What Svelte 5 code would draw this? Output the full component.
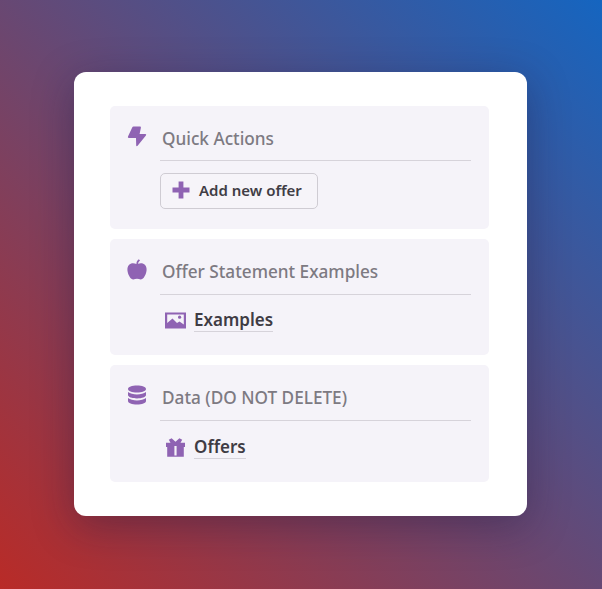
<script>
  const sections = [
    { title: "Quick Actions", icon: "bolt", button: "Add new offer" },
    { title: "Offer Statement Examples", icon: "apple", link: "Examples", linkIcon: "image" },
    { title: "Data (DO NOT DELETE)", icon: "database", link: "Offers", linkIcon: "gift" }
  ];

  const icons = {
    bolt: "M6.5 0.5 H13 Q14.2 0.5 13.9 1.8 L12.6 8 H18.4 Q19.8 8.2 18.9 9.6 L10.6 19.8 Q9.4 20.8 9.2 19.4 L9 12 H1.8 Q0.4 11.6 1 10.4 L5.2 1.6 Q5.6 0.5 6.5 0.5 Z",
    apple: "M9.4 5 C9.4 3 10.2 1.2 11.8 0.2 L13 1.6 C11.9 2.4 11.2 3.4 11 4.8 C12.6 4.2 14.4 4 15.8 4.6 C18.6 5.7 19.8 8.2 19.6 11 C19.3 15 16.8 20.2 14 20.4 C12.6 20.5 11.4 19.8 10 19.8 C8.6 19.8 7.4 20.5 6 20.4 C3.2 20.2 0.7 15 0.4 11 C0.2 8.2 1.4 5.7 4.2 4.6 C5.8 4 7.8 4.4 9.4 5 Z",
    database: "M9 0.4 C14 0.4 18 1.9 18 3.9 C18 5.9 14 7.4 9 7.4 C4 7.4 0 5.9 0 3.9 C0 1.9 4 0.4 9 0.4 Z M0 7 C2 8.7 5.4 9.4 9 9.4 C12.6 9.4 16 8.7 18 7 L18 10 C18 12 14 13.4 9 13.4 C4 13.4 0 12 0 10 Z M0 13.1 C2 14.8 5.4 15.4 9 15.4 C12.6 15.4 16 14.8 18 13.1 L18 16 C18 18 14 19.6 9 19.6 C4 19.6 0 18 0 16 Z"
  };
</script>

<main class="page">
  <div class="card">
    {#each sections as section}
      <section class="group">
        <div class="group-icon">
          {#if section.icon === "bolt"}
            <svg width="20" height="21" viewBox="0 0 20 21"><path d={icons.bolt} /></svg>
          {:else if section.icon === "apple"}
            <svg width="20" height="21" viewBox="0 0 20 21"><path d={icons.apple} /></svg>
          {:else}
            <svg class="db-icon" width="18" height="20" viewBox="0 0 18 20"><path d={icons.database} /></svg>
          {/if}
        </div>

        <div class="group-body">
          <h2>{section.title}</h2>

          <div class="group-content">
            {#if section.button}
              <button type="button" class="add-btn">
                <svg width="18" height="18" viewBox="0 0 18 18">
                  <path d="M6.6 0.5 H11.4 V6.6 H17.5 V11.4 H11.4 V17.5 H6.6 V11.4 H0.5 V6.6 H6.6 Z" />
                </svg>
                {section.button}
              </button>
            {:else}
              <div class="link-row">
                {#if section.linkIcon === "image"}
                  <svg class="link-icon" width="21" height="17" viewBox="0 0 21 17">
                    <path
                      fill-rule="evenodd"
                      d="M0 0.5 H21 V16.5 H0 Z M2.2 2.6 V11 L7.5 6.5 L12 11 L14.5 9.5 L18.8 12.5 V2.6 Z"
                    />
                    <circle cx="14.6" cy="5.2" r="1.6" />
                  </svg>
                {:else}
                  <svg class="link-icon" width="21" height="19" viewBox="0 0 21 19">
                    <path
                      fill-rule="evenodd"
                      d="M1 4.8 H5.5 L3.8 1.8 L6.6 0.2 L10.5 3.8 L14.4 0.2 L17.2 1.8 L15.5 4.8 H20 V9 H18.8 V18.8 H2.2 V9 H1 Z M9.4 8 V17.5 H11.6 V8 Z"
                    />
                  </svg>
                {/if}
                <a href="#top">{section.link}</a>
              </div>
            {/if}
          </div>
        </div>
      </section>
    {/each}
  </div>
</main>

<style>
  :global(body) {
    margin: 0;
  }

  .page {
    width: 602px;
    height: 589px;
    box-sizing: border-box;
    padding: 72px 0 0 74px;
    background: linear-gradient(45deg, #b92b27, #1565c0);
    font-family: "Noto Sans", "Open Sans", sans-serif;
    overflow: hidden;
  }

  .card {
    width: 453px;
    height: 444px;
    box-sizing: border-box;
    padding: 34px 38px 34px 36px;
    display: flex;
    flex-direction: column;
    gap: 10px;
    background: #fff;
    border-radius: 12px;
    box-shadow: 0 10px 40px rgba(20, 20, 60, 0.35);
  }

  .group {
    display: flex;
    padding: 0 18px 0 17px;
    background: #f5f3f9;
    border-radius: 5px;
  }

  .group:nth-child(1) {
    height: 123px;
  }

  .group:nth-child(2) {
    height: 116px;
  }

  .group:nth-child(3) {
    height: 117px;
  }

  .group-icon {
    width: 33px;
    flex: none;
    padding-top: 20px;
    line-height: 0;
  }

  .db-icon {
    margin-left: 1px;
  }

  .group-icon svg,
  .link-icon,
  .add-btn svg {
    fill: #8f63b3;
  }

  .group-body {
    flex: 1;
  }

  h2 {
    margin: 0;
    height: 55px;
    box-sizing: border-box;
    padding: 21px 0 0 2px;
    font-size: 17.2px;
    line-height: 24px;
    font-weight: 500;
    color: #7d7a82;
    border-bottom: 1px solid #d6d3da;
  }

  .group:not(:first-child) h2 {
    height: 56px;
  }

  .group-content {
    padding-top: 12px;
  }

  .group:nth-child(2) .group-content {
    padding-top: 13px;
  }

  .group:nth-child(3) .group-content {
    padding-top: 14px;
  }

  .add-btn {
    width: 158px;
    height: 36px;
    padding: 0 0 2px 11px;
    display: flex;
    align-items: center;
    gap: 9px;
    font-family: inherit;
    font-size: 15px;
    font-weight: 600;
    color: #403d45;
    background: #f6f4f9;
    border: 1px solid #cfccd3;
    border-radius: 5px;
  }

  .link-row {
    display: flex;
    align-items: center;
    gap: 8px;
    padding: 1px 0 0 5px;
  }

  a {
    font-size: 17px;
    line-height: 22px;
    font-weight: 600;
    color: #3f3c44;
    text-decoration: none;
    border-bottom: 1px solid #d6d3da;
  }
</style>
